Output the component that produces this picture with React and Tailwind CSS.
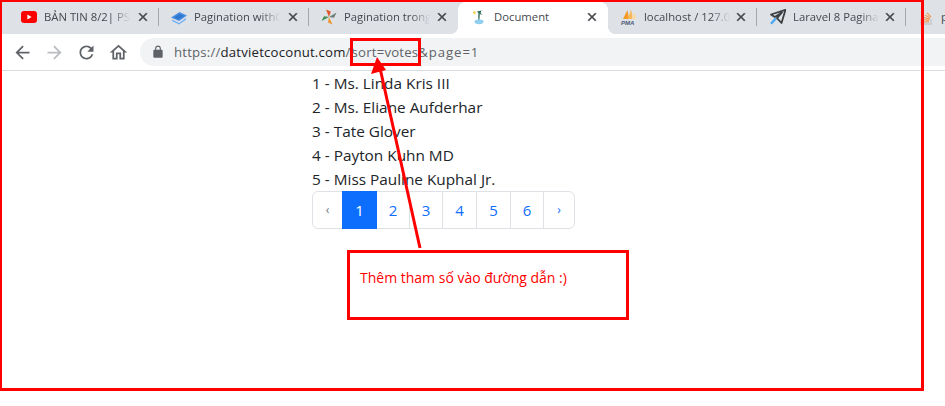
import { useState } from 'react'

const sans = 'font-["Open_Sans","Noto_Sans",sans-serif]'

// Material paths used by the browser chrome
const CloseIcon = () => (
  <svg viewBox="0 0 24 24" className="w-[14px] h-[14px] fill-[#45494d] shrink-0">
    <path d="M19 6.41L17.59 5 12 10.59 6.41 5 5 6.41 10.59 12 5 17.59 6.41 19 12 13.41 17.59 19 19 17.59 13.41 12z" stroke="#45494d" strokeWidth="1" />
  </svg>
)

const NavIcon = ({ d, className }) => (
  <svg viewBox="0 0 24 24" className={`w-[21px] h-[21px] ${className}`}>
    <path d={d} />
  </svg>
)

const YoutubeIcon = () => (
  <svg viewBox="0 0 16 16" className="w-4 h-4">
    <rect x="0" y="2" width="16" height="12" rx="3" fill="#f00" />
    <path d="M6.4 5.6 10.6 8l-4.2 2.4z" fill="#fff" />
  </svg>
)

const BookIcon = () => (
  <svg viewBox="0 0 16 16" className="w-4 h-4">
    <path d="M0 8.5 8.5 3 16 6.5 8 12z" fill="#4a90e2" />
    <path d="M1 10.5 8 14l7-5v1.8L8 15.5 1 12z" fill="#6fb0f2" />
    <path d="M2.5 8.6 8.6 5l4.6 2-5.4 3.4z" fill="#2f76cf" />
  </svg>
)

const PinwheelIcon = () => (
  <svg viewBox="0 0 16 16" className="w-4 h-4">
    <path d="M8 8 5 .5 9.8 2.5z" fill="#e0582c" />
    <path d="M8 8 15.5 3.5 13 8.8z" fill="#6b7f78" />
    <path d="M8 8 11.5 15.5 7 13.5z" fill="#f0962e" />
    <path d="M8 8 .5 12 3 7.2z" fill="#3f8f55" />
  </svg>
)

const PalmIcon = () => (
  <svg viewBox="0 0 16 16" className="w-4 h-4">
    <circle cx="3.5" cy="3.5" r="1.5" fill="#f4d35e" />
    <path d="M6 2.5 10.5 1.5 9.6 4 11.5 6 8.8 5 8.2 9H7.4L7.6 4.5z" fill="#2e6f5e" />
    <rect x="7.2" y="5" width="1.4" height="6" fill="#5c8a7c" />
    <ellipse cx="8" cy="12.8" rx="4.5" ry="2.4" fill="#8fd0ee" />
  </svg>
)

const PmaIcon = () => (
  <svg viewBox="0 0 18 16" className="w-[18px] h-4">
    <path d="M3 10 7.5 1 9 10z" fill="#f59a23" />
    <path d="M8 10 11 .5 13 10z" fill="#f7b955" />
    <path d="M11.5 10 14 3.5 16.5 10z" fill="#fbd9a5" />
    <text x="1" y="15.5" fontSize="6" fontWeight="700" fontStyle="italic" fontFamily="Liberation Sans, sans-serif" fill="#4a5a78">PMA</text>
  </svg>
)

const PlaneIcon = () => (
  <svg viewBox="0 0 16 16" className="w-4 h-4">
    <path d="M15.5 .8 1 5.5l3.8 2.6L12 3.5 7 9.2 11.5 14z" fill="none" stroke="#3c4043" strokeWidth="1.8" strokeLinejoin="round" />
    <path d="M5.8 9.5 1 14.8" stroke="#4aa8f5" strokeWidth="2.4" />
  </svg>
)

const StackIcon = () => (
  <svg viewBox="0 0 16 16" className="w-4 h-4 opacity-70">
    <path d="M3 10v5h10v-5" fill="none" stroke="#bcbbbb" strokeWidth="1.3" />
    <path d="M5 12.8h6M5.2 10.6l6 .7M5.8 8.4l5.8 1.7M7 6l5.2 3M9 3.8l4 4.2" stroke="#f48024" strokeWidth="1.2" />
  </svg>
)

const tabs = [
  { title: 'BẢN TIN 8/2| PS', Icon: YoutubeIcon, box: 'w-[151px] pl-[12px]' },
  { title: 'Pagination withC', Icon: BookIcon, box: 'w-[150px] pl-[11px]' },
  { title: 'Pagination trong', Icon: PinwheelIcon, box: 'w-[149px] pl-[11px]', noSep: true },
  { title: 'Document', Icon: PalmIcon, box: 'w-[150px] pl-[12px]', active: true },
  { title: 'localhost / 127.0', Icon: PmaIcon, box: 'w-[149px] pl-[12px]' },
  { title: 'Laravel 8 Pagina', Icon: PlaneIcon, box: 'w-[149px] pl-[12px]' },
]

const people = [
  'Ms. Linda Kris III',
  'Ms. Eliane Aufderhar',
  'Tate Glover',
  'Payton Kuhn MD',
  'Miss Pauline Kuphal Jr.',
]

const pages = [
  { label: '‹', w: 'w-[29px]', muted: true, small: true },
  { label: '1', w: 'w-[35px]' },
  { label: '2', w: 'w-[33px]' },
  { label: '3', w: 'w-[33px]' },
  { label: '4', w: 'w-[34px]' },
  { label: '5', w: 'w-[34px]' },
  { label: '6', w: 'w-[33px]' },
  { label: '›', w: 'w-[30px]', small: true },
]

function Tab({ title, Icon, active, noSep, box }) {
  return (
    <div className={`relative h-[32px] shrink-0 flex items-center pb-[2px] pr-[9px] ${box} ${active ? 'bg-white rounded-t-lg' : ''}`}>
      {active && (
        <>
          <span className="absolute bottom-0 -left-2 w-2 h-2 bg-[radial-gradient(circle_at_0_0,transparent_8px,#ffffff_8px)]" />
          <span className="absolute bottom-0 -right-2 w-2 h-2 bg-[radial-gradient(circle_at_100%_0,transparent_8px,#ffffff_8px)]" />
        </>
      )}
      <span className="w-[18px] flex justify-center shrink-0"><Icon /></span>
      <span className={`ml-[6px] w-[86px] overflow-hidden whitespace-nowrap text-[11.3px] text-[#45494e] ${active ? '' : '[mask-image:linear-gradient(to_right,black_78%,transparent)]'}`}>
        {title}
      </span>
      <span className="ml-auto"><CloseIcon /></span>
      {!active && !noSep && <span className="absolute right-0 top-[6px] h-[18px] w-px bg-[#a4a7ab]" />}
    </div>
  )
}

export default function App() {
  const [current] = useState('1')

  return (
    <div className={`relative w-[945px] h-[406px] overflow-hidden bg-white ${sans}`}>
      {/* Tab strip */}
      <div className="h-[34px] bg-[#dee1e6] flex items-end pl-[8px] overflow-hidden">
        {tabs.map(t => (
          <Tab key={t.title} {...t} />
        ))}
        <div className="h-[32px] shrink-0 flex items-center pb-[2px] pl-[12px] gap-[7px] text-[11.3px] text-[#45494e]">
          <StackIcon />
          <span>p</span>
        </div>
      </div>

      {/* Toolbar */}
      <div className="h-[37px] bg-white border-b border-[#dadce0] flex items-center pl-[12px]">
        <NavIcon className="fill-[#5f6368]" d="M20 11H7.83l5.59-5.59L12 4l-8 8 8 8 1.41-1.41L7.83 13H20v-2z" />
        <NavIcon className="fill-[#b9bbbe] ml-[11px]" d="M12 4l-1.41 1.41L16.17 11H4v2h12.17l-5.58 5.59L12 20l8-8z" />
        <NavIcon className="fill-[#5f6368] ml-[11px]" d="M17.65 6.35C16.2 4.9 14.21 4 12 4c-4.42 0-7.99 3.58-7.99 8s3.57 8 7.99 8c3.73 0 6.84-2.55 7.73-6h-2.08c-.82 2.33-3.04 4-5.65 4-3.31 0-6-2.69-6-6s2.69-6 6-6c1.66 0 3.14.69 4.22 1.78L13 11h7V4l-2.35 2.35z" />
        <NavIcon className="fill-[#5f6368] ml-[11px]" d="M12 5.69l5 4.5V18h-2v-6H9v6H7v-7.81l5-4.5M12 3L2 12h3v8h6v-6h2v6h6v-8h3L12 3z" />
        <div className="ml-[11px] flex-1 h-[28px] bg-[#f1f3f4] rounded-l-[14px] flex items-center pl-[11px]">
          <svg viewBox="0 0 24 24" className="w-[14px] h-[14px] fill-[#5f6368]">
            <path d="M18 8h-1V6c0-2.76-2.24-5-5-5S7 3.24 7 6v2H6c-1.1 0-2 .9-2 2v10c0 1.1.9 2 2 2h12c1.1 0 2-.9 2-2V10c0-1.1-.9-2-2-2zM9 6c0-1.66 1.34-3 3-3s3 1.34 3 3v2H9V6z" />
          </svg>
          <span className="ml-[9px] pt-[1px] text-[13.2px] tracking-[0.2px] text-[#5f6368] whitespace-nowrap">
            https://<span className="text-[#202124]">datvietcoconut.com</span>
            <span className="tracking-[-2.3px]">/?</span>sort=votes
            <span className="tracking-[0.9px]">&amp;page=1</span>
          </span>
        </div>
      </div>

      {/* Page content */}
      <div className="pl-[312px] text-[#212529]">
        {people.map((name, i) => (
          <div key={name} className="h-[24px] leading-[24px] text-[15.35px]">
            {i + 1} - {name}
          </div>
        ))}
        <div className="flex w-[263px] h-[38px] border border-[#dee2e6] rounded-[6px] text-[15px]">
          {pages.map((p, i) => (
            <div
              key={p.label}
              className={`${p.w} flex items-center justify-center ${p.small ? 'text-[12px]' : ''} ${i > 1 && i < 7 ? 'border-r border-[#dee2e6]' : ''} ${p.label === current ? 'bg-[#0d6efd] text-white -my-px' : p.muted ? 'text-[#6c757d]' : 'text-[#0d6efd]'}`}
            >
              {p.label}
            </div>
          ))}
        </div>
      </div>

      {/* Red annotations drawn over the screenshot */}
      <div className="absolute left-[-1px] top-[-1px] w-[925px] h-[392px] border-[3px] border-[#ff0000] pointer-events-none" />
      <div className="absolute left-[350px] top-[38px] w-[71px] h-[28px] border-[3px] border-[#ff0000]" />
      <svg className="absolute left-0 top-0 w-[945px] h-[406px] pointer-events-none" viewBox="0 0 945 406">
        <path d="M420 248 380 68" stroke="#ff0000" strokeWidth="3" />
        <path d="M377 57 371 74 386 70z" fill="#ff0000" />
      </svg>
      <div className="absolute left-[347px] top-[250px] w-[282px] h-[70px] border-[3px] border-[#ff0000] bg-white pl-[10px] pt-[15px] text-[14px] leading-[20px] text-[#ff0000]">
        Thêm tham số vào đường dẫn :)
      </div>
    </div>
  )
}
